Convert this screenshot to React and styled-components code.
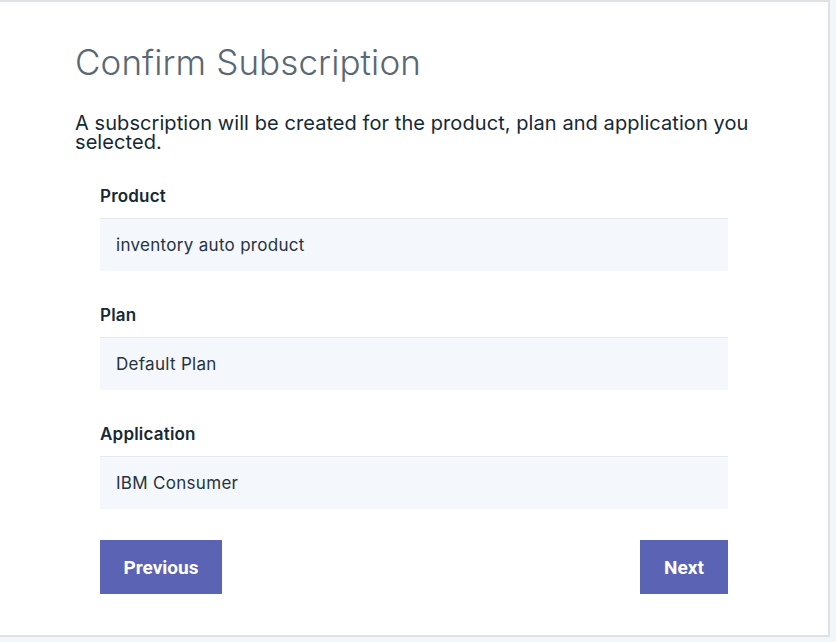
import React from "react";
import styled, { createGlobalStyle } from "styled-components";

const Global = createGlobalStyle`
  html, body { margin: 0; padding: 0; background: #f3f6f9; }
  body { font-family: "Inter", "Lato", sans-serif; }
  * { box-sizing: border-box; }
`;

const Page = styled.div`
  width: 836px;
  height: 642px;
  background: #f3f6f9;
`;

const Card = styled.div`
  width: 830px;
  height: 637px;
  background: #fff;
  border-top: 2px solid #dfe3e6;
  border-right: 2px solid #dfe3e6;
  border-bottom: 2px solid #dfe3e6;
  padding: 36px 0 0 75px;
`;

const Title = styled.h1`
  margin: 0;
  font-weight: 300;
  font-size: 35px;
  line-height: 48px;
  color: #5a6872;
  letter-spacing: 0.1px;
`;

const Intro = styled.p`
  margin: 28px 0 0;
  width: 700px;
  font-size: 20px;
  line-height: 19px;
  color: #152935;
  letter-spacing: 0.07px;
`;

const Form = styled.div`
  margin: 34px 0 0 25px;
  width: 628px;
  display: flex;
  flex-direction: column;
`;

const Group = styled.div`
  display: flex;
  flex-direction: column;
  margin-bottom: ${(p) => (p.$last ? 31 : 34)}px;
`;

const Label = styled.div`
  font-size: 17px;
  font-weight: 600;
  color: #152935;
  line-height: 20px;
  margin-bottom: 12px;
  letter-spacing: 0.2px;
`;

const Value = styled.div`
  height: 53px;
  background: #f4f7fb;
  border-top: 1px solid #e6e9ed;
  padding-left: 16px;
  display: flex;
  align-items: center;
  font-size: 17px;
  letter-spacing: 0.3px;
  color: #253340;
`;

const Actions = styled.div`
  display: flex;
  justify-content: space-between;
`;

const Button = styled.button`
  height: 54px;
  width: ${(p) => p.$w}px;
  padding: 0;
  border: none;
  background: #5b63b5;
  color: #fff;
  font-family: "Roboto", sans-serif;
  font-weight: 700;
  font-size: 19px;
  cursor: pointer;
`;

const fields = [
  ["Product", "inventory auto product"],
  ["Plan", "Default Plan"],
  ["Application", "IBM Consumer"],
];

export default function App() {
  return (
    <Page>
      <Global />
      <Card>
        <Title>Confirm Subscription</Title>
        <Intro>
          A subscription will be created for the product, plan and application you selected.
        </Intro>
        <Form>
          {fields.map(([l, v], i) => (
            <Group key={l} $last={i === fields.length - 1}>
              <Label>{l}</Label>
              <Value>{v}</Value>
            </Group>
          ))}
          <Actions>
            <Button $w={122}>Previous</Button>
            <Button $w={88}>Next</Button>
          </Actions>
        </Form>
      </Card>
    </Page>
  );
}
